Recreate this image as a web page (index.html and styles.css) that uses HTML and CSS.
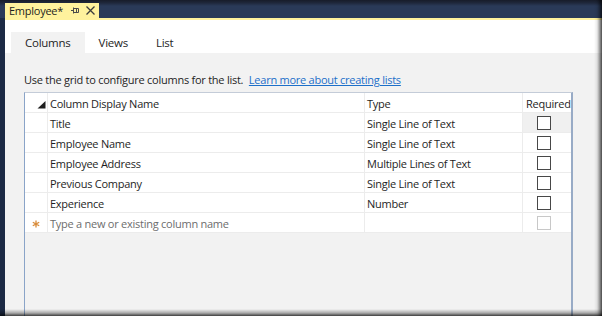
FILE: index.html
```html
<!DOCTYPE html>
<html>
<head>
<meta charset="utf-8">
<link rel="stylesheet" href="styles.css">
</head>
<body>
<div class="window">
  <div class="titlebar">
    <div class="doctab">
      <span class="doctab-title">Employee*</span>
      <svg class="pin" width="8" height="7" viewBox="0 0 8 7"><path d="M0 3.5H2.5M2.5 0.5V6.5M2.5 1.5H7.5V5.5H2.5M5.5 1.5V5.5" fill="none" stroke="#4a4a4a" stroke-width="1"/></svg>
      <svg class="close" width="9" height="9" viewBox="0 0 9 9"><path d="M0.5 0.5L8.5 8.5M8.5 0.5L0.5 8.5" stroke="#3c3c3c" stroke-width="1.3"/></svg>
    </div>
  </div>
  <div class="panel">
    <div class="tabstrip">
      <div class="tab active">Columns</div>
      <div class="tab">Views</div>
      <div class="tab">List</div>
    </div>
    <div class="content">
      <p class="hint">Use the grid to configure columns for the list. <a class="link" href="#">Learn more about creating lists</a></p>
      <div class="grid">
        <div class="row header">
          <div class="cell rowhead"><svg width="9" height="8" viewBox="0 0 9 8"><polygon points="8.5,0 8.5,7.5 0.5,7.5" fill="#1e1e1e"/></svg></div>
          <div class="cell">Column Display Name</div>
          <div class="cell">Type</div>
          <div class="cell last">Required</div>
        </div>
        <div class="row">
          <div class="cell rowhead"></div>
          <div class="cell">Title</div>
          <div class="cell">Single Line of Text</div>
          <div class="cell last current"><span class="check"></span></div>
        </div>
        <div class="row">
          <div class="cell rowhead"></div>
          <div class="cell">Employee Name</div>
          <div class="cell">Single Line of Text</div>
          <div class="cell last"><span class="check"></span></div>
        </div>
        <div class="row">
          <div class="cell rowhead"></div>
          <div class="cell">Employee Address</div>
          <div class="cell">Multiple Lines of Text</div>
          <div class="cell last"><span class="check"></span></div>
        </div>
        <div class="row">
          <div class="cell rowhead"></div>
          <div class="cell">Previous Company</div>
          <div class="cell">Single Line of Text</div>
          <div class="cell last"><span class="check"></span></div>
        </div>
        <div class="row">
          <div class="cell rowhead"></div>
          <div class="cell">Experience</div>
          <div class="cell">Number</div>
          <div class="cell last"><span class="check"></span></div>
        </div>
        <div class="row">
          <div class="cell rowhead"><svg width="8" height="8" viewBox="0 0 8 8"><path d="M4 0.5V7.5M0.8 2.2L7.2 5.8M7.2 2.2L0.8 5.8" stroke="#d98c3a" stroke-width="1.3"/></svg></div>
          <div class="cell placeholder">Type a new or existing column name</div>
          <div class="cell"></div>
          <div class="cell last"><span class="check disabled"></span></div>
        </div>
      </div>
    </div>
  </div>
</div>
</body>
</html>
```
FILE: styles.css
```css
* { box-sizing: border-box; }
html, body { margin: 0; padding: 0; }
body {
  font-family: "Open Sans", "Noto Sans", sans-serif;
  font-size: 11px;
  letter-spacing: -0.25px;
  color: #1e1e1e;
  background: #1b2233;
}
.window {
  position: relative;
  width: 602px;
  height: 316px;
  display: flex;
  flex-direction: column;
  background: #1c2a45;
  overflow: hidden;
}
.window::after {
  content: "";
  position: absolute;
  inset: 0;
  pointer-events: none;
  background:
    linear-gradient(to left, rgba(0,0,0,0.7) 0, rgba(0,0,0,0.3) 3px, rgba(0,0,0,0.08) 5px, rgba(0,0,0,0) 8px),
    linear-gradient(to top, rgba(0,0,0,0.75) 0, rgba(0,0,0,0.3) 3px, rgba(0,0,0,0) 7px);
}
.titlebar {
  height: 18px;
  flex: none;
  display: flex;
  align-items: flex-end;
  padding-left: 5px;
  background: linear-gradient(#171c29 0, #1f283c 3px, #2a3a58 6px, #2a3a58 18px);
}
.doctab {
  height: 15px;
  width: 94px;
  background: #fff29d;
  display: flex;
  align-items: center;
  padding-left: 4px;
}
.doctab-title {
  font-size: 11px;
  line-height: 15px;
  color: #1e1e1e;
}
.pin { margin-left: 8px; }
.close { margin-left: 7px; }
.panel {
  flex: 1;
  margin-left: 5px;
  border-top: 2px solid #fff29d;
  background: #f2f2f2;
  display: flex;
  flex-direction: column;
}
.tabstrip {
  background: #ffffff;
  padding: 12px 0 0 6px;
  display: flex;
  height: 33px;
}
.tab {
  height: 21px;
  line-height: 21px;
  padding: 0 14px;
  font-size: 11.5px;
}
.tab.active { background: #f2f2f2; }
.content {
  flex: 1;
  display: flex;
  flex-direction: column;
  padding: 19px 29px 0 19px;
}
.hint {
  margin: 0;
  line-height: 16px;
  height: 16px;
  font-size: 11px;
}
.link {
  color: #1c6fc9;
  text-decoration: underline;
  margin-left: 3px;
}
.grid {
  margin-top: 4px;
  flex: 1;
  border-top: 1px solid #c4ccd8;
  border-left: 1px solid #8aa4c8;
  border-right: 2px solid #98abc6;
  background: #f2f2f2;
}
.row {
  display: grid;
  grid-template-columns: 23px 317px 158px 1fr;
  height: 20px;
  background: #ffffff;
  border-bottom: 1px solid #ececec;
}
.cell {
  border-right: 1px solid #ececec;
  line-height: 17px;
  padding-left: 2px;
  padding-top: 2px;
  white-space: nowrap;
  overflow: hidden;
  display: flex;
  align-items: center;
}
.cell.last { border-right: none; padding-left: 14px; padding-top: 0; }
.row.header .cell.last { padding-left: 3px; padding-top: 2px; }
.cell.rowhead {
  padding-left: 0;
  justify-content: center;
}
.row.header .rowhead { justify-content: flex-end; padding-right: 1px; align-items: flex-end; padding-bottom: 3px; padding-top: 0; }
.cell.current { background: #f0f0f0; }
.placeholder { color: #6d6d6d; }
.check {
  display: block;
  width: 14px;
  height: 14px;
  border: 1px solid #484848;
  background: #ffffff;
}
.check.disabled { border-color: #c8c8c8; }
```
